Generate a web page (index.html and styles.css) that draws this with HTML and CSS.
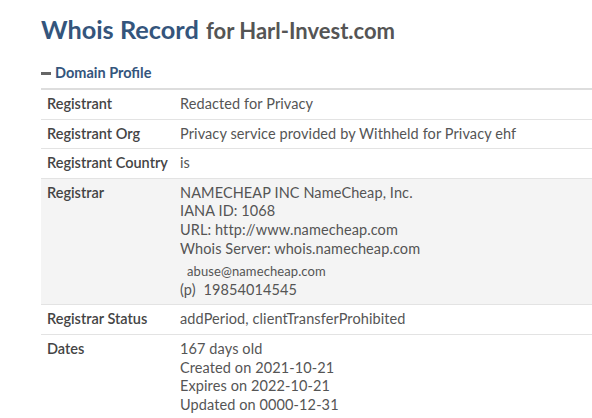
FILE: index.html
```html
<!DOCTYPE html>
<html lang="en">
<head>
    <meta charset="UTF-8">
    <meta name="viewport" content="width=device-width, initial-scale=1.0">
    <title>Whois Record for Harl-Invest.com</title>
    <link rel="stylesheet" href="styles.css">
</head>
<body>
    <div class="whois-container">
        <h1 class="page-title">Whois Record <small>for Harl-Invest.com</small></h1>

        <h2 class="section-title"><span class="minus-icon"></span>Domain Profile</h2>

        <table class="profile-table">
            <tr>
                <th>Registrant</th>
                <td>Redacted for Privacy</td>
            </tr>
            <tr>
                <th>Registrant Org</th>
                <td>Privacy service provided by Withheld for Privacy ehf</td>
            </tr>
            <tr>
                <th>Registrant Country</th>
                <td>is</td>
            </tr>
            <tr class="shaded">
                <th>Registrar</th>
                <td>
                    NAMECHEAP INC NameCheap, Inc.<br>
                    IANA ID: 1068<br>
                    URL: http://www.namecheap.com<br>
                    Whois Server: whois.namecheap.com
                    <div class="contact">
                        <div class="email">abuse@namecheap.com</div>
                        <div><abbr>(p)</abbr> 19854014545</div>
                    </div>
                </td>
            </tr>
            <tr>
                <th>Registrar Status</th>
                <td>addPeriod, clientTransferProhibited</td>
            </tr>
            <tr>
                <th>Dates</th>
                <td>
                    167 days old<br>
                    Created on 2021-10-21<br>
                    Expires on 2022-10-21<br>
                    Updated on 0000-12-31
                </td>
            </tr>
        </table>
    </div>
</body>
</html>
```

FILE: styles.css
```css
* {
    margin: 0;
    padding: 0;
    box-sizing: border-box;
}

body {
    font-family: Lato, 'Open Sans', sans-serif;
    font-size: 14.5px;
    line-height: 18.6px;
    color: #555;
    background: #fff;
    overflow: hidden;
}

.whois-container {
    padding: 14px 0 0 41px;
}

.page-title {
    font-size: 25.3px;
    font-weight: bold;
    color: #34557c;
    line-height: 30px;
    margin-bottom: 18px;
}

.page-title small {
    font-size: 22px;
    color: #555;
    margin-left: 1px;
}

.section-title {
    font-size: 14.5px;
    font-weight: bold;
    color: #34557c;
    line-height: 18px;
    margin-bottom: 6px;
    display: flex;
    align-items: center;
}

.minus-icon {
    display: inline-block;
    width: 10px;
    height: 3px;
    background: #666;
    margin-right: 4px;
}

.profile-table {
    width: 100%;
    border-collapse: collapse;
    border-top: 2px solid #ddd;
}

.profile-table th,
.profile-table td {
    text-align: left;
    vertical-align: top;
    padding: 5px 6px;
    border-bottom: 1px solid #e3e3e3;
}

.profile-table td {
    letter-spacing: 0.1px;
}

.profile-table th {
    width: 133px;
    font-weight: 600;
    color: #444;
}

.profile-table .shaded {
    background: #f4f4f4;
}

.contact {
    margin-top: 4px;
}

.contact .email {
    font-size: 13px;
    padding-left: 7px;
}

abbr {
    margin-right: 4px;
}
```
